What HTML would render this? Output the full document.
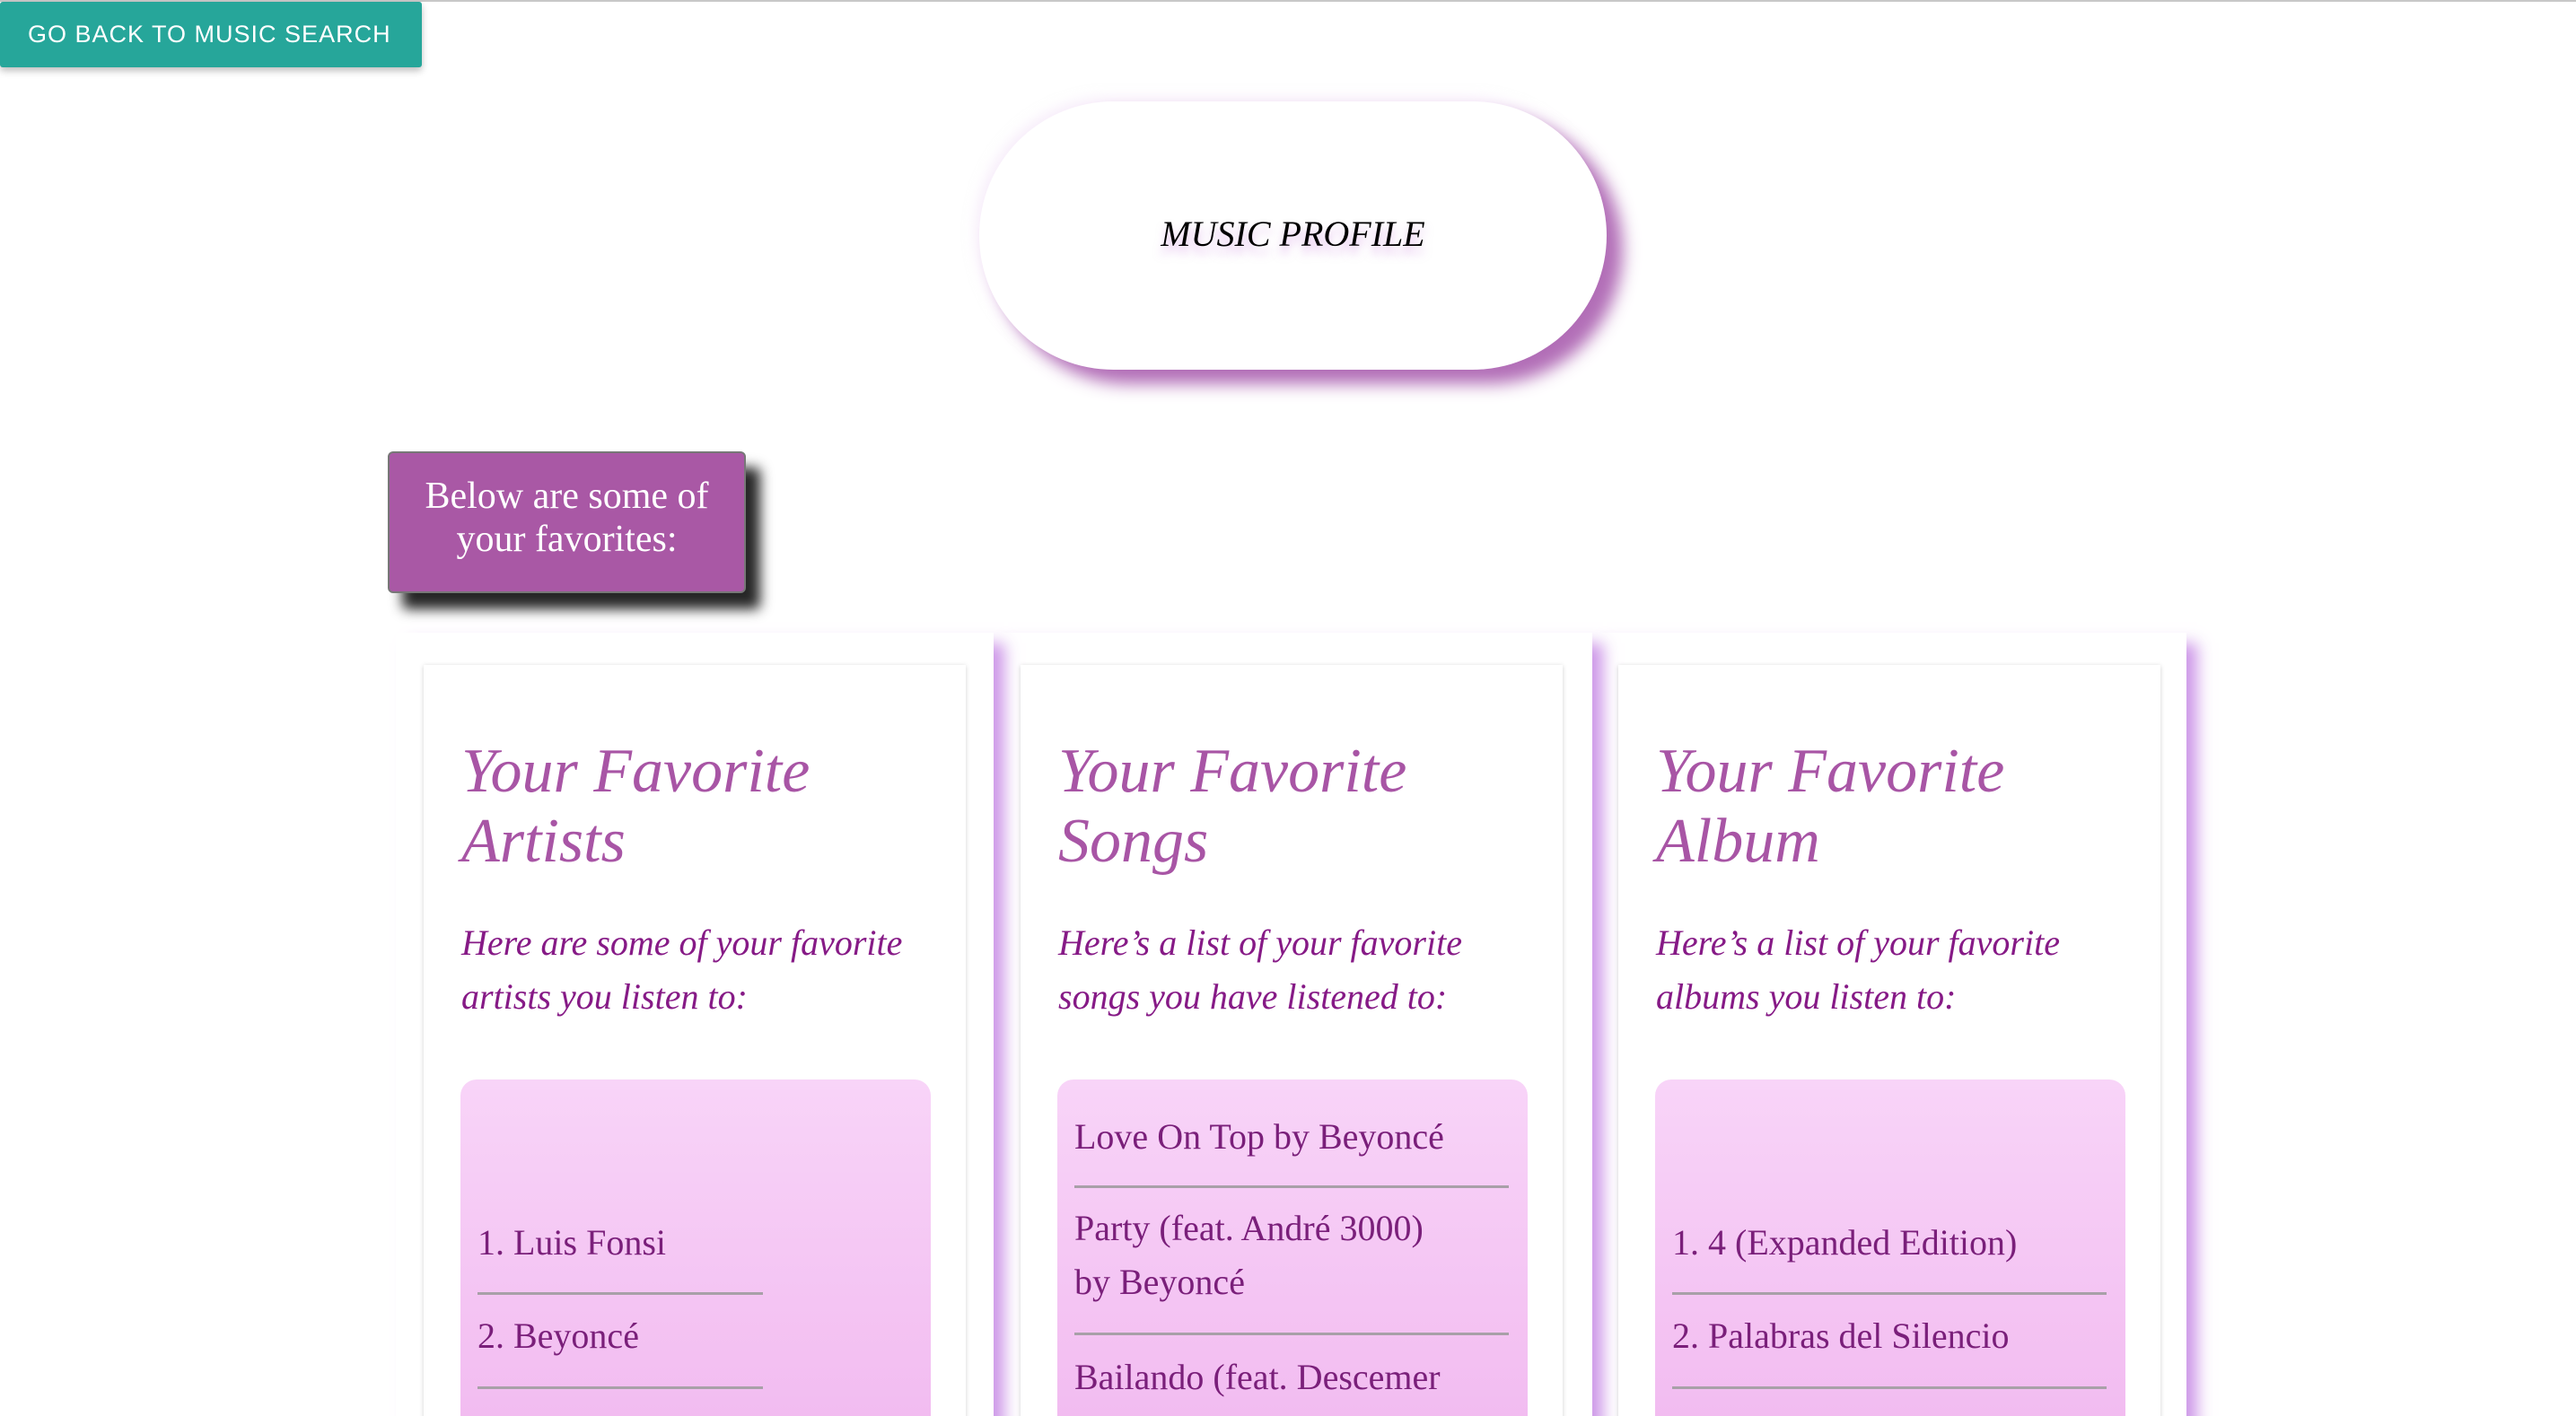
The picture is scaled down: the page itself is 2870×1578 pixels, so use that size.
<!DOCTYPE html>
<html><head><meta charset="utf-8"><style>
*{margin:0;padding:0;box-sizing:border-box}
html,body{width:2870px;height:1578px;overflow:hidden;background:#fff}
body{font-family:"Liberation Serif",serif}
#w{position:relative;width:2870px;height:1578px;overflow:hidden}
.a{position:absolute}
.topline{left:0;top:0;width:2870px;height:2px;background:#c8c8c8}
.btn{left:0;top:2px;width:470px;height:73px;background:#26a69a;color:#fff;font-family:"Liberation Sans",sans-serif;font-size:27px;line-height:73px;padding-left:31px;letter-spacing:1px;box-shadow:0 4px 8px rgba(0,0,0,.25);border-radius:3px}
.pill{left:1091px;top:113px;width:699px;height:299px;background:#fff;border-radius:150px;box-shadow:18px 16px 18px rgba(165,85,170,.85),-4px -4px 14px rgba(240,220,245,.5)}
.pill span{position:absolute;left:0;right:0;top:124px;text-align:center;font-style:italic;font-size:40px;color:#000;text-shadow:0 8px 10px rgba(200,120,220,.5)}
.box{left:432px;top:503px;width:399px;height:158px;background:#a958a5;border:2px solid #777;border-radius:6px;box-shadow:16px 18px 14px rgba(0,0,0,.85);color:#fff;text-align:center;font-size:42px;line-height:48px;padding-top:24px}
.col{top:705px;height:1000px;background:#fff;box-shadow:14px 10px 16px -2px rgba(200,140,230,.9)}
.card{top:741px;width:604px;height:1000px;background:#fff;box-shadow:0 1px 5px rgba(0,0,0,.18);z-index:10}
.t{position:absolute;left:42px;top:80px;font-style:italic;font-size:70px;line-height:78px;color:#a855a5}
.d{position:absolute;left:42px;top:280px;font-style:italic;font-size:40px;line-height:60px;color:#861a86}
.l{position:absolute;left:41px;top:462px;width:524px;height:500px;border-radius:18px;background:linear-gradient(#f8d4f8,#f0b4ee)}
.i{position:absolute;left:19px;font-size:40px;line-height:60px;color:#7a1f7a}
.hr{position:absolute;left:19px;height:3px;background:#a8a0a8}
</style></head><body><div id="w">
<div class="a topline"></div>
<div class="a btn">GO BACK TO MUSIC SEARCH</div>
<div class="a pill"><span>MUSIC PROFILE</span></div>
<div class="a box">Below are some of<br>your favorites:</div>

<div class="a col" style="left:441px;width:666px;z-index:3"></div>
<div class="a col" style="left:1107px;width:667px;z-index:2"></div>
<div class="a col" style="left:1774px;width:662px;z-index:1"></div>

<div class="a card" style="left:472px">
<div class="t">Your Favorite<br>Artists</div>
<div class="d">Here are some of your favorite<br>artists you listen to:</div>
<div class="l">
<div class="i" style="top:152px">1. Luis Fonsi</div>
<div class="hr" style="top:237px;width:318px"></div>
<div class="i" style="top:256px">2. Beyoncé</div>
<div class="hr" style="top:342px;width:318px"></div>
</div></div>

<div class="a card" style="left:1137px">
<div class="t">Your Favorite<br>Songs</div>
<div class="d">Here’s a list of your favorite<br>songs you have listened to:</div>
<div class="l">
<div class="i" style="top:34px">Love On Top by Beyoncé</div>
<div class="hr" style="top:118px;width:484px"></div>
<div class="i" style="top:136px">Party (feat. André 3000)<br>by Beyoncé</div>
<div class="hr" style="top:282px;width:484px"></div>
<div class="i" style="top:302px">Bailando (feat. Descemer</div>
</div></div>

<div class="a card" style="left:1803px">
<div class="t">Your Favorite<br>Album</div>
<div class="d">Here’s a list of your favorite<br>albums you listen to:</div>
<div class="l">
<div class="i" style="top:152px">1. 4 (Expanded Edition)</div>
<div class="hr" style="top:237px;width:484px"></div>
<div class="i" style="top:256px">2. Palabras del Silencio</div>
<div class="hr" style="top:342px;width:484px"></div>
</div></div>
</div></body></html>
